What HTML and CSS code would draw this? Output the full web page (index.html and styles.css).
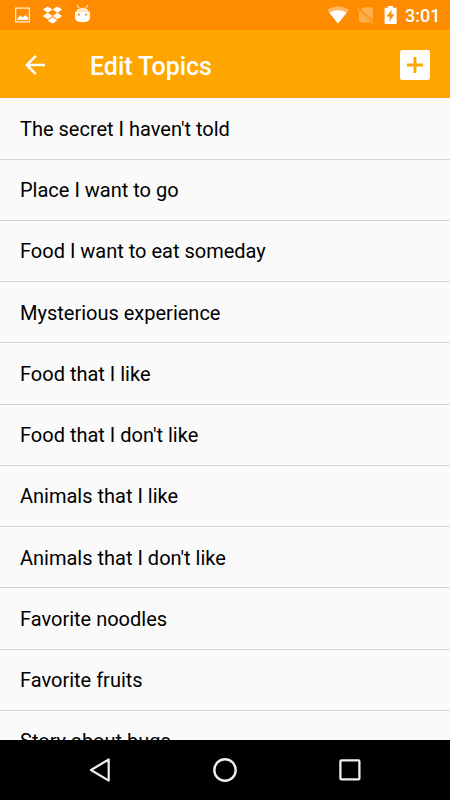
FILE: index.html
```html
<!DOCTYPE html>
<html lang="en">
<head>
<meta charset="utf-8">
<title>Edit Topics</title>
<link rel="stylesheet" href="styles.css">
</head>
<body>
<div class="screen">
  <div class="status">
    <svg class="status-icons" width="100" height="30" viewBox="0 0 100 30">
      <path d="M15.7 8.2H29.3V21.8H15.7Z" fill="none" stroke="#ffe9cf" stroke-width="1.3"/>
      <path d="M17.5 20V18.5L20.5 15.2L22.5 17.5L25.5 15L28 18V20Z" fill="#fff"/>
      <path d="M47.7 6.4L52.5 9.6L47.7 12.8L42.9 9.6ZM57.3 6.4L62.1 9.6L57.3 12.8L52.5 9.6ZM47.7 12.8L52.5 16L47.7 19.2L42.9 16ZM57.3 12.8L62.1 16L57.3 19.2L52.5 16ZM52.5 17.3L57.2 20.4L52.5 23.7L47.8 20.4Z" fill="#fff"/>
      <path d="M77.2 5.2L79.2 8.2M87.8 5.2L85.8 8.2" stroke="#fff" stroke-width="1"/>
      <path d="M76.2 12.2C76.2 6.2 88.8 6.2 88.8 12.2Z" fill="#ffe3c2"/>
      <path d="M75 12H90V17.5C90 20.5 87.5 22.2 82.5 22.2S75 20.5 75 17.5Z" fill="#fff"/>
      <circle cx="79" cy="14.6" r="1.1" fill="#ff8c00"/><circle cx="86" cy="14.6" r="1.1" fill="#ff8c00"/>
    </svg>
    <div class="status-right">
      <svg width="74" height="30" viewBox="326 0 74 30">
        <path d="M338 23.6L327 9.8Q338 2.6 349 9.8Z" fill="#ffb866"/>
        <path d="M338 23.6L329.3 12.7Q338 8 346.7 12.7Z" fill="#fff"/>
        <path d="M363.5 7.2H371.3Q372.8 7.2 372.8 8.7V20.5L361 9.3ZM359 11.2L370.3 22.2H360.5Q359 22.2 359 20.7Z" fill="#ffae52"/>
        <path d="M357.3 8.2L372.7 23.4" stroke="#ffae52" stroke-width="1.3"/>
        <path d="M388 6H393V7.8H396.6V24H384.6V7.8H388Z" fill="#fff"/>
        <path d="M391.7 9.8L386.6 16.4H389.8L389.2 21.5L394.5 14.3H391.2Z" fill="#ff8c00"/>
      </svg>
      <span class="clock">3:01</span>
    </div>
  </div>
  <header class="bar">
    <svg class="back" width="30" height="30" viewBox="0 0 24 24"><path d="M20 11H7.83l5.59-5.59L12 4l-8 8 8 8 1.41-1.41L7.83 13H20z" fill="#fff"/></svg>
    <h1 class="title">Edit Topics</h1>
    <svg class="add" width="30" height="30" viewBox="0 0 30 30"><rect width="30" height="30" rx="2.5" fill="#fff"/><path d="M15 7V23M7 15H23" stroke="#ffa500" stroke-width="2.8"/></svg>
  </header>
  <ul class="list">
    <li class="row">The secret I haven't told</li>
    <li class="row">Place I want to go</li>
    <li class="row">Food I want to eat someday</li>
    <li class="row">Mysterious experience</li>
    <li class="row">Food that I like</li>
    <li class="row">Food that I don't like</li>
    <li class="row">Animals that I like</li>
    <li class="row">Animals that I don't like</li>
    <li class="row">Favorite noodles</li>
    <li class="row">Favorite fruits</li>
    <li class="row">Story about bugs</li>
  </ul>
  <nav class="nav">
    <svg width="30" height="30" viewBox="85 755 30 30"><path d="M108.7 759.5V780.6L91 770Z" fill="none" stroke="#eee" stroke-width="2.2" stroke-linejoin="round"/></svg>
    <svg width="30" height="30" viewBox="210 755 30 30"><circle cx="225" cy="770" r="10.7" fill="none" stroke="#eee" stroke-width="2.4"/></svg>
    <svg width="30" height="30" viewBox="335 755 30 30"><rect x="340.4" y="760.4" width="19" height="19" rx="1" fill="none" stroke="#eee" stroke-width="2.3"/></svg>
  </nav>
</div>
</body>
</html>
```
FILE: styles.css
```css
* { box-sizing: border-box; }
body { margin: 0; font-family: Roboto, "Liberation Sans", sans-serif; }
.screen {
  width: 450px;
  height: 800px;
  display: flex;
  flex-direction: column;
  overflow: hidden;
  background: #fafafa;
}
.status {
  flex: 0 0 30px;
  display: flex;
  justify-content: space-between;
  background: #ff8c00;
  color: #fff;
}
.status-right { display: flex; padding-right: 10px; }
.clock {
  width: 40px;
  padding: 1px 0 0 5px;
  font-size: 18px;
  line-height: 29px;
  font-weight: 500;
  white-space: nowrap;
}
.bar {
  flex: 0 0 68.3px;
  display: flex;
  align-items: center;
  padding: 1px 20px 0;
  background: #ffa500;
  color: #fff;
}
.title {
  flex: 1;
  margin: 0 0 0 40px;
  padding-top: 4px;
  font-size: 25px;
  font-weight: 500;
  line-height: 30px;
  letter-spacing: -0.05px;
}
.list {
  flex: 1;
  min-height: 0;
  margin: 0;
  padding: 0;
  overflow: hidden;
  list-style: none;
}
.row {
  height: 61.25px;
  padding: 0.5px 20px 0;
  border-bottom: 1px solid #d5d5d5;
  font-size: 20px;
  line-height: 61px;
  color: #000;
}
.nav {
  flex: 0 0 60px;
  display: flex;
  align-items: center;
  justify-content: space-between;
  padding: 0 85px;
  background: #000;
}
```
